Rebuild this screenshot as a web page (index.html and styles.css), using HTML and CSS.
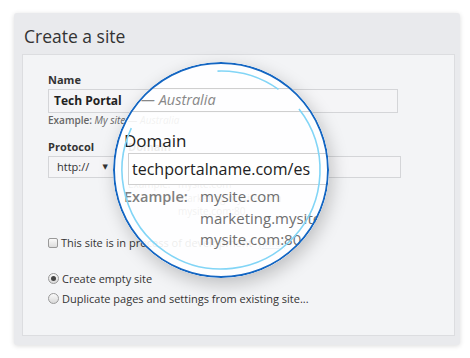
FILE: index.html
```html
<html lang="en">
<head>
    <meta charset="UTF-8">
    <title>Create a site</title>
    <link rel="stylesheet" href="styles.css">
</head>
<body>

    <div class="card">
        <h1 class="title">Create a site</h1>

        <div class="panel">
            <div class="field">
                <label class="label">Name</label>
                <div class="input name-input">Tech Portal</div>
                <div class="hint"><span class="hint-key">Example:</span> <em>My site — Australia</em></div>
            </div>

            <div class="row">
                <div class="field protocol">
                    <label class="label">Protocol</label>
                    <div class="input select">http:// <span class="caret">&#9660;</span></div>
                </div>
                <div class="field domain">
                    <label class="label">Domain</label>
                    <div class="input domain-input"></div>
                    <div class="examples">
                        <span>Example:</span><span>mysite.com</span>
                        <span></span><span>marketing.mysite.com</span>
                        <span></span><span>mysite.com:80</span>
                    </div>
                </div>
            </div>

            <div class="option check-row">
                <span class="checkbox"></span>
                This site is in process of development <a class="more">(info)</a>
            </div>

            <div class="options">
                <div class="option"><span class="radio checked"></span>Create empty site</div>
                <div class="option"><span class="radio"></span>Duplicate pages and settings from existing site...</div>
            </div>
        </div>
    </div>

    <!-- magnifier over the domain field -->
    <div class="lens">
        <div class="lens-content">
            <div class="lens-name"><em>— Australia</em></div>
            <div class="lens-label">Domain</div>
            <div class="lens-input">techportalname.com/es</div>
            <div class="lens-examples">
                <span class="ex">Example:</span><span>mysite.com</span>
                <span></span><span>marketing.mysite.com</span>
                <span></span><span>mysite.com:80</span>
            </div>
        </div>
        <svg class="lens-ring" viewBox="0 0 216 216" width="216" height="216">
            <circle cx="108" cy="108" r="107" fill="none" stroke="#1466c2" stroke-width="2"/>
            <path d="M186 47 A99 99 0 1 1 18.3 66.2" fill="none" stroke="#82d5f6" stroke-width="1.6"/>
            <path d="M104.5 9.1 A99 99 0 0 1 165.5 27.4" fill="none" stroke="#82d5f6" stroke-width="1.6"/>
        </svg>
    </div>

</body>
</html>
```

FILE: styles.css
```css
* {
    font-family: "Open Sans", "DejaVu Sans", sans-serif;
    box-sizing: border-box;
}

body {
    margin: 0;
    background: #fff;
    color: #333;
}

.card {
    margin: 13px 0 0 14px;
    width: 446px;
    height: 332px;
    background: #e9eaed;
    border-radius: 3px;
    box-shadow: 0 1px 5px rgba(0, 0, 0, 0.14);
    padding-bottom: 9px;
    display: flex;
    flex-direction: column;
}

.title {
    margin: 0;
    height: 41px;
    padding: 10px 0 0 10px;
    font-size: 17.5px;
    font-weight: 400;
    line-height: 26px;
    color: #333;
}

.panel {
    flex: 1;
    margin: 0 5px 0 8px;
    background: #f3f4f6;
    border: 1px solid #dcdde0;
    padding: 18px 0 0 25px;
}

.label {
    display: block;
    font-size: 11px;
    font-weight: 700;
    line-height: 14px;
    color: #333;
    margin-bottom: 2px;
}

.input {
    border: 1px solid #d4d5d8;
    background: #f5f5f7;
    font-size: 11px;
    color: #333;
}

.name-input {
    width: 350px;
    height: 24px;
    line-height: 22px;
    padding-left: 5px;
    font-size: 12px;
    font-weight: 700;
    color: #222;
}

.hint {
    margin-top: 1px;
    font-size: 10px;
    line-height: 13px;
    color: #666;
}

.hint-key {
    font-weight: 600;
}

.row {
    display: flex;
    gap: 10px;
    margin-top: 13px;
}

.protocol {
    width: 70px;
}

.select {
    height: 22px;
    line-height: 20px;
    padding-left: 8px;
    display: flex;
    justify-content: space-between;
    padding-right: 9px;
}

.caret {
    font-size: 7px;
}

.domain {
    width: 273px;
}

.domain-input {
    height: 22px;
}

.examples {
    display: grid;
    grid-template-columns: 50px auto;
    font-size: 10px;
    line-height: 13.5px;
    color: #666;
}

.option {
    display: flex;
    align-items: center;
    gap: 3px;
    font-size: 11px;
    line-height: 20px;
    color: #333;
}

.check-row {
    margin-top: 14px;
}

.more {
    color: #4a7fb5;
    text-decoration: underline;
    margin-left: 3px;
}

.options {
    margin-top: 16px;
}

.checkbox {
    width: 10px;
    height: 10px;
    border: 1px solid #999;
    border-radius: 2px;
    background: linear-gradient(#fafafa, #dcdcdc);
}

.radio {
    width: 11px;
    height: 11px;
    border: 1px solid #9a9a9a;
    border-radius: 50%;
    background: linear-gradient(#fafafa, #d8d8d8);
    display: flex;
    align-items: center;
    justify-content: center;
}

.radio.checked::after {
    content: "";
    width: 5px;
    height: 5px;
    border-radius: 50%;
    background: #444;
}

.lens {
    position: absolute;
    left: 113px;
    top: 62px;
    width: 216px;
    height: 216px;
    border-radius: 50%;
    overflow: hidden;
    background: rgba(255, 255, 255, 0.91);
    box-shadow: 3px 6px 18px rgba(0, 0, 0, 0.22);
}

.lens-ring {
    position: absolute;
    left: 0;
    top: 0;
}

.lens-content {
    padding-top: 26px;
}

.lens-name {
    height: 24px;
    border-top: 1px solid #cfcfcf;
    border-bottom: 1px solid #cfcfcf;
    padding-left: 28px;
    font-size: 14.5px;
    line-height: 22px;
    color: #888;
}

.lens-label {
    margin: 18px 0 0 11px;
    font-size: 17px;
    line-height: 22px;
    color: #222;
}

.lens-input {
    margin: 1px 0 0 15px;
    width: 230px;
    height: 32px;
    border: 1px solid #cfcfcf;
    background: #fff;
    padding-left: 3px;
    font-size: 16px;
    line-height: 30px;
    color: #222;
    white-space: nowrap;
}

.lens-examples {
    margin: 1px 0 0 11px;
    display: grid;
    grid-template-columns: 76px auto;
    font-size: 15px;
    line-height: 21.5px;
    color: #6f6f6f;
    white-space: nowrap;
}

.lens-examples .ex {
    font-weight: 600;
    font-size: 14.5px;
    color: #808080;
}
```
